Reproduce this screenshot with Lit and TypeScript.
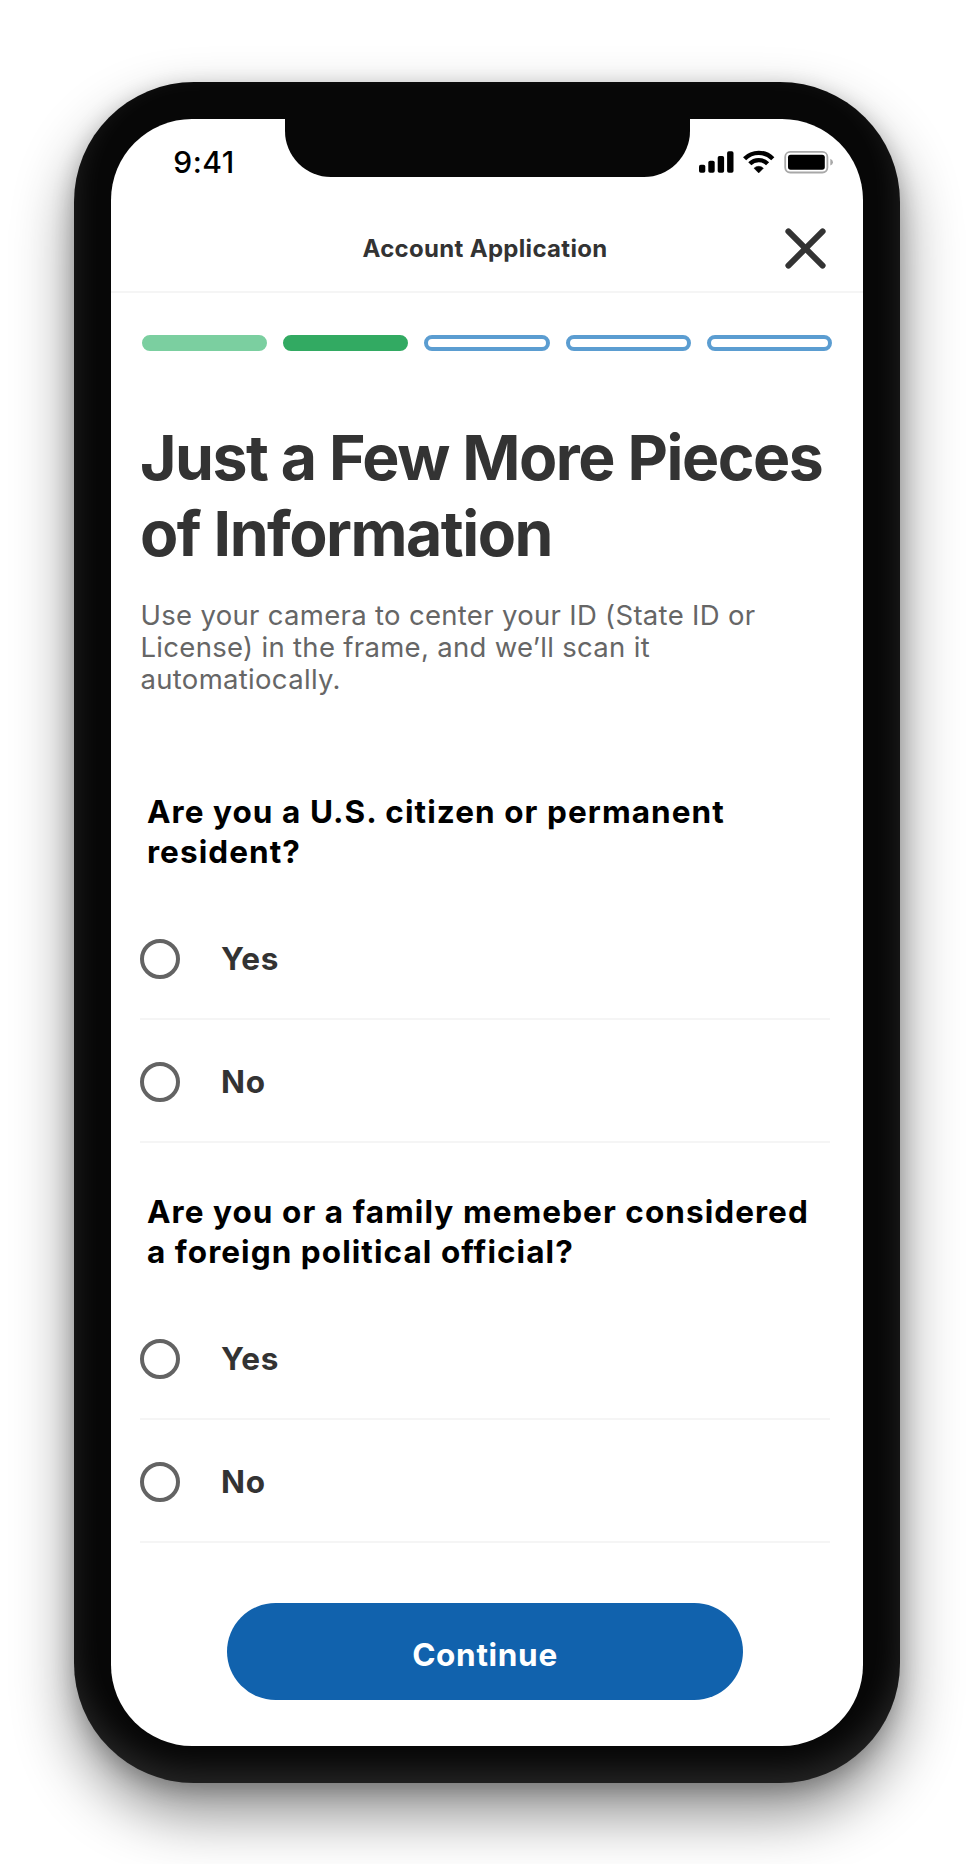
import { LitElement, html, css } from "lit";
import { customElement, property, state } from "lit/decorators.js";
import { classMap } from "lit/directives/class-map.js";

@customElement("status-bar")
export class StatusBar extends LitElement {
  static styles = css`
    :host {
      display: grid;
      grid-template-columns: 173.7px 404.7px 1fr;
      height: 57.7px;
    }
    .time {
      padding: 28.3px 0 0 62px;
      font-size: 30px;
      line-height: 30px;
      font-weight: 550;
      letter-spacing: 0.5px;
      color: #000;
      white-space: nowrap;
    }
    .notch {
      background: #070707;
      border-radius: 0 0 46px 46px;
    }
    .icons {
      display: block;
      margin: 31px 0 0 9.3px;
    }
  `;

  render() {
    return html`
      <div class="time">9:41</div>
      <div class="notch"></div>
      <svg class="icons" width="135" height="24" viewBox="699 150 135 24">
        <rect x="699" y="164.7" width="6.3" height="8" rx="1.8" />
        <rect x="708.3" y="160.7" width="6.4" height="12" rx="1.8" />
        <rect x="717.7" y="156" width="6.4" height="16.7" rx="1.8" />
        <rect x="727.1" y="151.3" width="6.4" height="21.4" rx="1.8" />
        <g fill="none" stroke="#000" stroke-width="4.4">
          <path d="M744.6 158.7A19.9 19.9 0 0 1 772.8 158.7" />
          <path d="M749.8 163.8A12.6 12.6 0 0 1 767.6 163.8" />
        </g>
        <path d="M758.7 172.9L754 168.2A6.8 6.8 0 0 1 763.4 168.2Z" stroke="#000" stroke-width=".5" stroke-linejoin="round" />
        <rect x="785.2" y="151.9" width="42.2" height="20.6" rx="5" fill="none" stroke="#a8a8a8" stroke-width="1.8" />
        <rect x="788" y="154.7" width="36.8" height="15" rx="2.6" />
        <path d="M830.3 158.8Q833 160 833 162.2Q833 164.4 830.3 165.6Z" fill="#a8a8a8" />
      </svg>
    `;
  }
}

@customElement("progress-steps")
export class ProgressSteps extends LitElement {
  @property({ type: Number }) total = 5;
  @property({ type: Number }) current = 1;

  static styles = css`
    :host {
      display: grid;
      grid-template-columns: repeat(5, 1fr);
      gap: 16.25px;
    }
    .step {
      box-sizing: border-box;
      height: 16.5px;
      border: 4px solid #5b9dd1;
      border-radius: 9px;
      background: #fff;
    }
    .done {
      background: #7bcfa0;
      border-color: #7bcfa0;
    }
    .active {
      background: #32aa62;
      border-color: #32aa62;
    }
  `;

  render() {
    return Array.from(
      { length: this.total },
      (_, i) => html`<div
        class=${classMap({ step: true, done: i < this.current, active: i === this.current })}
      ></div>`
    );
  }
}

@customElement("yes-no-question")
export class YesNoQuestion extends LitElement {
  @property({ attribute: false }) lines: string[] = [];
  @state() private selected = "";

  static styles = css`
    :host {
      display: block;
    }
    .question {
      margin: 0 0 25.6px;
      padding-left: 7px;
      font-size: 31.5px;
      line-height: 40px;
      font-weight: 700;
      letter-spacing: 1.06px;
      color: #000;
      white-space: nowrap;
    }
    .line {
      display: block;
    }
    .option {
      box-sizing: border-box;
      display: flex;
      align-items: center;
      gap: 41px;
      height: 122.7px;
      padding-top: 2px;
      border-bottom: 2px solid #f5f5f5;
      cursor: pointer;
    }
    .radio {
      box-sizing: border-box;
      width: 40px;
      height: 40px;
      border: 4px solid #636363;
      border-radius: 50%;
    }
    .radio.on {
      background: #1162ad;
      box-shadow: inset 0 0 0 6px #fff;
    }
    .label {
      font-size: 31.5px;
      line-height: 40px;
      font-weight: 700;
      letter-spacing: 0.7px;
      color: #333;
    }
  `;

  render() {
    return html`
      <h2 class="question">${this.lines.map((l) => html`<span class="line">${l}</span>`)}</h2>
      ${["Yes", "No"].map(
        (o) => html`<div class="option" @click=${() => (this.selected = o)}>
          <span class=${classMap({ radio: true, on: this.selected === o })}></span>
          <span class="label">${o}</span>
        </div>`
      )}
    `;
  }
}

@customElement("app-root")
export class AppRoot extends LitElement {
  static styles = css`
    :host {
      box-sizing: border-box;
      display: block;
      height: 1864px;
      padding: 82px 74px 81px;
      background: #fff;
      overflow: hidden;
      font-family: "Inter", sans-serif;
    }
    .phone {
      box-sizing: border-box;
      height: 1701px;
      padding: 37px 37.3px;
      border-radius: 120px;
      background: #070707;
      box-shadow:
        0 30px 60px rgba(0, 0, 0, 0.46),
        0 6px 22px rgba(0, 0, 0, 0.22),
        inset 0 -14px 30px rgba(255, 255, 255, 0.12);
    }
    .screen {
      display: flex;
      flex-direction: column;
      height: 1626.5px;
      border-radius: 81px;
      background: #fff;
    }
    .header {
      box-sizing: border-box;
      display: grid;
      grid-template-columns: 1fr auto 1fr;
      align-items: center;
      height: 116px;
      padding: 29px 4px 0 0;
      border-bottom: 2px solid #f5f5f5;
    }
    .header-title {
      grid-column: 2;
      padding-top: 1.4px;
      font-size: 24px;
      line-height: 30px;
      font-weight: 700;
      letter-spacing: 0.31px;
      color: #333;
    }
    .close {
      display: block;
      justify-self: end;
      margin-right: 32.8px;
    }
    .content {
      display: flex;
      flex-direction: column;
      padding: 42.3px 32.7px 0 28.7px;
    }
    .steps {
      margin: 0 -2px 67.6px 2px;
    }
    .title {
      margin: 0 0 27px;
      font-size: 62.5px;
      line-height: 76.3px;
      font-weight: 700;
      letter-spacing: -1.47px;
      color: #333;
      white-space: nowrap;
    }
    .intro {
      margin: 0 0 97.3px;
      padding-left: 0.5px;
      font-size: 27.5px;
      line-height: 32px;
      letter-spacing: 0.31px;
      color: #666;
      white-space: nowrap;
    }
    .question + .question {
      margin-top: 49px;
    }
    .continue {
      align-self: center;
      width: 516.6px;
      height: 97px;
      margin-top: 60px;
      padding: 7.5px 0 0;
      border: 0;
      border-radius: 48.5px;
      background: #1162ad;
      color: #fff;
      font: 700 31.5px/40px "Inter", sans-serif;
      letter-spacing: 0.68px;
    }
  `;

  render() {
    return html`
      <div class="phone">
        <main class="screen">
          <status-bar></status-bar>
          <header class="header">
            <span class="header-title">Account Application</span>
            <svg class="close" width="41" height="41" viewBox="0 0 41 41" fill="none" stroke="#333" stroke-width="6" stroke-linecap="round">
              <path d="M3.4 3.4L37.6 37.6M37.6 3.4L3.4 37.6" />
            </svg>
          </header>
          <div class="content">
            <progress-steps class="steps"></progress-steps>
            <h1 class="title">Just a Few More Pieces<br />of Information</h1>
            <p class="intro">
              Use your camera to center your ID (State ID or<br />License) in the frame, and we’ll
              scan it<br />automatiocally.
            </p>
            <yes-no-question
              class="question"
              .lines=${["Are you a U.S. citizen or permanent", "resident?"]}
            ></yes-no-question>
            <yes-no-question
              class="question"
              .lines=${["Are you or a family memeber considered", "a foreign political official?"]}
            ></yes-no-question>
            <button class="continue">Continue</button>
          </div>
        </main>
      </div>
    `;
  }
}
